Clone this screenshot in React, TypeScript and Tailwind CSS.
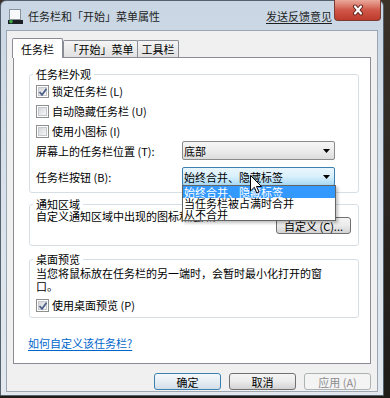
import React from 'react';

function Checkbox({ checked, label, className = 'h-[20px]' }: { checked?: boolean; label: string; className?: string }) {
  return (
    <div className={`flex items-center ${className}`}>
      <span className="relative flex h-[13px] w-[13px] shrink-0 items-center justify-center border border-[#8e8f8f] bg-white">
        <span className="h-[9px] w-[9px] border border-[#c4c7cc] bg-gradient-to-br from-[#d4d7dc] to-[#f7f7f7]" />
        {checked && (
          <svg className="absolute left-[1px] top-[1px]" width="10" height="10" viewBox="0 0 10 10">
            <path d="M1.5 5 L4 7.8 L8.5 1.8" fill="none" stroke="#4b5e86" strokeWidth="1.7" />
          </svg>
        )}
      </span>
      <span className="ml-[3px] leading-[14px]">{label}</span>
    </div>
  );
}

function Select({ value, focused, children }: { value: string; focused?: boolean; children?: React.ReactNode }) {
  return (
    <div
      className={`relative flex h-[19px] w-[153px] shrink-0 items-center rounded-[2px] border pl-[1px] pr-[4px] ${
        focused
          ? 'border-[#3c7fb1] bg-gradient-to-b from-[#eaf6fd] via-[#d9f0fc] to-[#a7d9f5]'
          : 'border-[#8a8a8a] bg-gradient-to-b from-[#f6f6f6] via-[#ececec] to-[#dcdcdc]'
      }`}
    >
      <span className="flex-1 leading-[14px]">{value}</span>
      <svg width="7" height="4" viewBox="0 0 7 4">
        <path d="M0 0 H7 L3.5 4 Z" fill="#000" />
      </svg>
      {children}
    </div>
  );
}

function Button({ label, kind = 'normal', className = '' }: { label: string; kind?: 'normal' | 'default' | 'disabled'; className?: string }) {
  const styles: Record<string, string> = {
    default: 'border-[#3c7fb1] bg-gradient-to-b from-[#f4f8fb] via-[#e6eef4] to-[#d3dee7] text-black',
    normal: 'border-[#707070] bg-gradient-to-b from-[#f4f4f4] via-[#ebebeb] to-[#d2d2d2] text-black',
    disabled: 'border-[#adb2b5] bg-[#f4f4f4] text-[#8d8d8d]',
  };
  return (
    <div className={`flex h-[17px] items-center justify-center rounded-[3px] border leading-[14px] ${styles[kind]} ${className}`}>
      {label}
    </div>
  );
}

export default function App() {
  return (
    <div className="flex h-[398px] w-[390px] bg-gradient-to-b from-[#3b3229] to-[#1f1b17] font-['Noto_Sans_CJK_SC',sans-serif] text-[11px] text-black">
      <div className="flex h-[396px] w-[384px] flex-col rounded-t-[6px] border border-[#55616d] bg-gradient-to-b from-[#c9d6e3] via-[#d9e2ec] to-[#e2e8ee]">
        {/* title bar */}
        <div className="flex h-[29px] items-start pl-[7px]">
          <div className="flex h-[30px] items-center">
            <svg width="15" height="15" viewBox="0 0 15 15">
              <rect x="1.5" y="0.5" width="11" height="10" fill="#f7f9fb" stroke="#8a949e" />
              <rect x="0" y="11" width="15" height="4" fill="#1b1f24" />
              <circle cx="3" cy="12.6" r="1.8" fill="#3aa845" />
            </svg>
            <span className="ml-[5px] leading-[14px] text-[#1e1e1e]">任务栏和「开始」菜单属性</span>
          </div>
          <div className="flex-1" />
          <div className="flex h-[30px] items-center">
            <span className="leading-[14px] text-[#1e1e1e] underline underline-offset-2">发送反馈意见</span>
          </div>
          <div className="-mt-[1px] ml-[2px] mr-[2px] flex h-[21px] w-[47px] items-center justify-center rounded-b-[4px] border border-t-0 border-[#7a3b33] bg-gradient-to-b from-[#e9a99c] via-[#cf5749] to-[#bd3a2b]">
            <svg width="16" height="12" viewBox="0 0 16 12">
              <path d="M5 2.5 L11 9.5 M11 2.5 L5 9.5" stroke="#5a1e18" strokeWidth="4" strokeLinecap="round" />
              <path d="M5 2.5 L11 9.5 M11 2.5 L5 9.5" stroke="#ffffff" strokeWidth="2.2" strokeLinecap="round" />
            </svg>
          </div>
        </div>

        {/* client area */}
        <div className="mx-[5px] mb-[3px] flex flex-1 flex-col border border-[#9aa6b2] bg-[#f0f0f0] pl-[6px] pr-[5px] pt-[7px]">
          {/* tabs */}
          <div className="flex h-[19px] items-start">
            <div className="relative z-10 -ml-[1px] flex h-[20px] w-[51px] items-center justify-center rounded-t-[2px] border border-b-0 border-[#898c95] bg-white leading-[14px]">
              任务栏
            </div>
            <div className="flex h-[17px] w-[75px] items-center justify-center self-end rounded-t-[2px] border border-b-0 border-[#898c95] bg-gradient-to-b from-[#f5f5f5] to-[#e0e0e0] leading-[14px]">
              「开始」菜单
            </div>
            <div className="-ml-[1px] flex h-[17px] w-[42px] items-center justify-center self-end rounded-t-[2px] border border-b-0 border-[#898c95] bg-gradient-to-b from-[#f5f5f5] to-[#e0e0e0] leading-[14px]">
              工具栏
            </div>
          </div>

          {/* tab panel */}
          <div className="flex h-[307px] w-[358px] flex-col border border-[#898c95] bg-white pl-[15px] pr-[11px] pt-[9px]">
            <fieldset className="rounded-[3px] border border-[#d5dfe5] px-[6px] pb-[6px]">
              <legend className="-ml-[3px] px-[3px] leading-[14px]">任务栏外观</legend>
              <Checkbox checked label="锁定任务栏 (L)" />
              <Checkbox label="自动隐藏任务栏 (U)" />
              <Checkbox label="使用小图标 (I)" />
              <div className="flex h-[19px] items-center">
                <span className="w-[146px] shrink-0 leading-[14px]">屏幕上的任务栏位置 (T):</span>
                <Select value="底部" />
              </div>
              <div className="mt-[7px] flex h-[19px] items-center">
                <span className="w-[146px] shrink-0 leading-[14px]">任务栏按钮 (B):</span>
                <Select value="始终合并、隐藏标签" focused>
                  <div className="absolute -left-[1px] top-full z-20 w-[154px] border border-[#646464] bg-white shadow-[2px_2px_3px_rgba(0,0,0,0.25)]">
                    <div className="h-[12px] bg-[#3399ff] pl-[1px] leading-[12px] text-white">始终合并、隐藏标签</div>
                    <div className="h-[11px] pl-[1px] leading-[11px]">当任务栏被占满时合并</div>
                    <div className="h-[11px] pl-[1px] leading-[11px]">从不合并</div>
                  </div>
                  <svg className="absolute left-[67px] top-[7px] z-30" width="12" height="19" viewBox="0 0 12 19">
                    <path d="M0.5 0.5 L0.5 16 L4.3 12.3 L6.8 18 L9 17 L6.5 11.5 L11.5 11.5 Z" fill="#fff" stroke="#000" strokeWidth="1" />
                  </svg>
                </Select>
              </div>
            </fieldset>

            <fieldset className="mt-[5px] rounded-[3px] border border-[#d5dfe5] px-[6px] pb-[11px]">
              <legend className="-ml-[3px] px-[3px] leading-[12px]">通知区域</legend>
              <div className="flex items-start justify-between">
                <p className="leading-[13px]">自定义通知区域中出现的图标和通知。</p>
                <Button label="自定义 (C)..." className="mr-[1px] mt-[7px] w-[75px]" />
              </div>
            </fieldset>

            <fieldset className="mt-[7px] rounded-[3px] border border-[#d5dfe5] px-[6px] pb-[2px]">
              <legend className="-ml-[3px] px-[3px] leading-[12px]">桌面预览</legend>
              <div className="w-[292px] pt-[2px] leading-[13px]">
                <div>当您将鼠标放在任务栏的另一端时，会暂时最小化打开的窗</div>
                <div>口。</div>
              </div>
              <Checkbox checked label="使用桌面预览 (P)" className="mt-[2px] h-[20px]" />
            </fieldset>

            <span className="-ml-[1px] mt-[18px] self-start leading-[14px] text-[#0066cc] underline underline-offset-2">
              如何自定义该任务栏?
            </span>
          </div>

          {/* dialog buttons */}
          <div className="mt-[9px] flex w-[358px] justify-end gap-[8px]">
            <Button label="确定" kind="default" className="w-[67px]" />
            <Button label="取消" className="w-[67px]" />
            <Button label="应用 (A)" kind="disabled" className="w-[67px]" />
          </div>
        </div>
      </div>
    </div>
  );
}
